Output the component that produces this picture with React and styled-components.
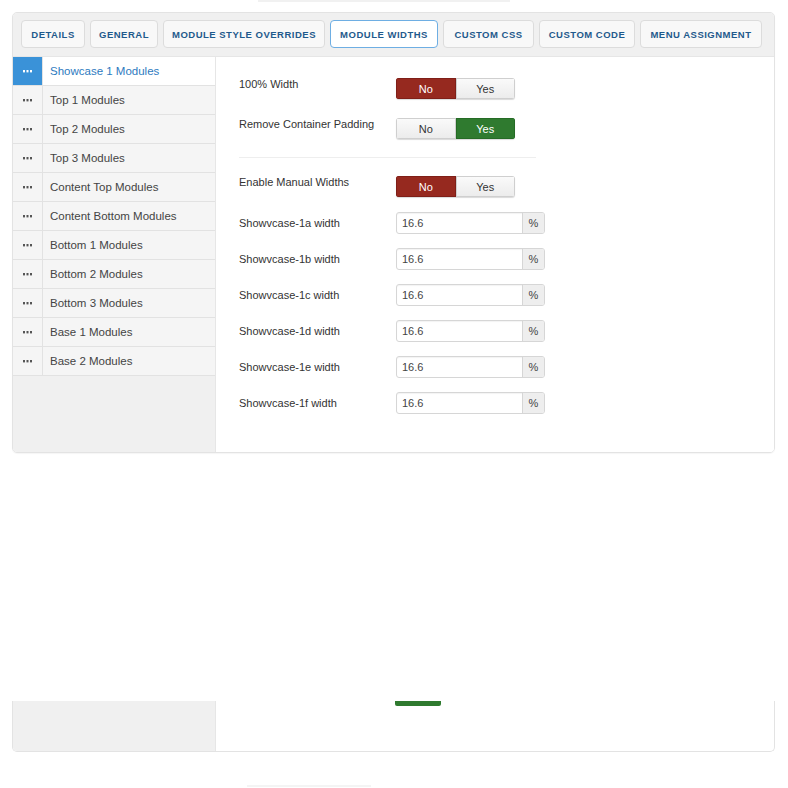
import styled, { createGlobalStyle, css } from "styled-components";

const Global = createGlobalStyle`
  html, body {
    margin: 0;
    padding: 0;
    background: #ffffff;
  }
  body {
    font-family: "Liberation Sans", Arial, sans-serif;
    font-size: 12px;
    color: #333;
  }
`;

const Page = styled.div`
  width: 788px;
  height: 788px;
  padding: 0 12px;
  box-sizing: border-box;
  overflow: hidden;
`;

const TopStrip = styled.div`
  height: 2px;
  width: 252px;
  margin-left: 246px;
  background: #f1f1f1;
`;

const Panel = styled.div`
  margin-top: 10px;
  width: 763px;
  height: 441px;
  box-sizing: border-box;
  border: 1px solid #e3e3e3;
  border-radius: 5px;
  overflow: hidden;
  display: flex;
  flex-direction: column;
  box-shadow: 0 1px 1px rgba(0, 0, 0, 0.04);
`;

const TabBar = styled.div`
  display: flex;
  gap: 5px;
  padding: 7px 8px 8px 8px;
  background: #f0f0f0;
  border-bottom: 1px solid #e6e6e6;
`;

const Tab = styled.div`
  width: ${({ $w }) => $w}px;
  height: 28px;
  flex-shrink: 0;
  box-sizing: border-box;
  display: flex;
  align-items: center;
  justify-content: center;
  border: 1px solid ${({ $active }) => ($active ? "#6eaee3" : "#dcdcdc")};
  border-radius: 4px;
  background: ${({ $active }) => ($active ? "#ffffff" : "#f8f8f8")};
  color: #1f5a8c;
  font-size: 9.5px;
  font-weight: bold;
  letter-spacing: 0.5px;
  text-transform: uppercase;
  white-space: nowrap;
`;

const Body = styled.div`
  flex: 1;
  display: flex;
`;

const Sidebar = styled.div`
  width: 203px;
  box-sizing: border-box;
  background: #f0f0f0;
  border-right: 1px solid #e6e6e6;
`;

const Item = styled.div`
  display: flex;
  height: 29px;
  box-sizing: border-box;
  border-bottom: 1px solid #e2e2e2;
  background: ${({ $active }) => ($active ? "#ffffff" : "#f5f5f5")};
`;

const Handle = styled.div`
  width: 30px;
  box-sizing: border-box;
  flex-shrink: 0;
  display: flex;
  align-items: center;
  justify-content: center;
  border-right: 1px solid #e2e2e2;
  background: ${({ $active }) => ($active ? "#3a92d8" : "transparent")};
  color: ${({ $active }) => ($active ? "#ffffff" : "#555")};
`;

const ItemLabel = styled.div`
  display: flex;
  align-items: center;
  padding-left: 7px;
  font-size: 11.5px;
  color: ${({ $active }) => ($active ? "#2d7ac0" : "#444")};
`;

const Content = styled.div`
  flex: 1;
  background: #ffffff;
  padding: 21px 0 0 23px;
`;

const Row = styled.div`
  display: flex;
  align-items: ${({ $top }) => ($top ? "flex-start" : "center")};
  margin-bottom: ${({ $gap }) => $gap}px;
`;

const Label = styled.div`
  width: 157px;
  flex-shrink: 0;
  font-size: 11px;
  color: #333;
`;

const Toggle = styled.div`
  display: flex;
  width: 119px;
  height: 21px;
  border-radius: 3px;
  overflow: hidden;
  box-shadow: 0 1px 1px rgba(0, 0, 0, 0.15);
`;

const ToggleBtn = styled.div`
  flex: 1;
  display: flex;
  align-items: center;
  justify-content: center;
  font-size: 11px;
  box-sizing: border-box;
  ${({ $on, $color }) =>
    $on
      ? css`
          background: ${$color};
          color: #fff;
          border: 1px solid ${$color === "#96291f" ? "#7f1f18" : "#256b25"};
        `
      : css`
          background: linear-gradient(#fafafa, #ececec);
          color: #333;
          border: 1px solid #cfcfcf;
        `}
`;

const Divider = styled.div`
  width: 297px;
  height: 1px;
  background: #eeeeee;
  margin: 0 0 18px 0;
`;

const InputGroup = styled.div`
  display: flex;
  width: 149px;
  height: 22px;
  box-sizing: border-box;
  border: 1px solid #d6d6d6;
  border-radius: 3px;
  overflow: hidden;
  box-shadow: inset 0 1px 1px rgba(0, 0, 0, 0.05);
`;

const Input = styled.div`
  flex: 1;
  display: flex;
  align-items: center;
  padding-left: 5px;
  font-size: 11px;
  color: #444;
`;

const Addon = styled.div`
  width: 21px;
  display: flex;
  align-items: center;
  justify-content: center;
  background: #eeeeee;
  border-left: 1px solid #d6d6d6;
  font-size: 11px;
  color: #444;
`;

const Fragment = styled.div`
  margin-top: 248px;
  width: 763px;
  height: 51px;
  box-sizing: border-box;
  border: 1px solid #e3e3e3;
  border-top: none;
  border-radius: 0 0 5px 5px;
  display: flex;
  overflow: hidden;
`;

const FragSide = styled.div`
  width: 203px;
  box-sizing: border-box;
  background: #f0f0f0;
  border-right: 1px solid #e6e6e6;
`;

const FragMain = styled.div`
  flex: 1;
  padding-left: 179px;
`;

const GreenSliver = styled.div`
  width: 46px;
  height: 5px;
  background: #2f7a2f;
  border-radius: 0 0 2px 2px;
`;

const BottomFaint = styled.div`
  margin: 33px 0 0 235px;
  width: 124px;
  height: 2px;
  background: #f4f4f4;
`;

const tabs = [
  ["Details", 64],
  ["General", 68],
  ["Module Style Overrides", 162],
  ["Module Widths", 108],
  ["Custom CSS", 91],
  ["Custom Code", 96],
  ["Menu Assignment", 122],
];

const items = [
  "Showcase 1 Modules",
  "Top 1 Modules",
  "Top 2 Modules",
  "Top 3 Modules",
  "Content Top Modules",
  "Content Bottom Modules",
  "Bottom 1 Modules",
  "Bottom 2 Modules",
  "Bottom 3 Modules",
  "Base 1 Modules",
  "Base 2 Modules",
];

const widths = ["1a", "1b", "1c", "1d", "1e", "1f"];

const Dots = () => (
  <svg width="9" height="3" viewBox="0 0 9 3">
    <rect x="0" y="0" width="2" height="2.4" fill="currentColor" />
    <rect x="3.5" y="0" width="2" height="2.4" fill="currentColor" />
    <rect x="7" y="0" width="2" height="2.4" fill="currentColor" />
  </svg>
);

const YesNo = ({ value }) => (
  <Toggle>
    <ToggleBtn $on={!value} $color="#96291f">No</ToggleBtn>
    <ToggleBtn $on={value} $color="#2f7a2f">Yes</ToggleBtn>
  </Toggle>
);

export default function App() {
  return (
    <Page>
      <Global />
      <TopStrip />
      <Panel>
        <TabBar>
          {tabs.map(([t, w]) => (
            <Tab key={t} $w={w} $active={t === "Module Widths"}>
              {t}
            </Tab>
          ))}
        </TabBar>
        <Body>
          <Sidebar>
            {items.map((it, i) => (
              <Item key={it} $active={i === 0}>
                <Handle $active={i === 0}>
                  <Dots />
                </Handle>
                <ItemLabel $active={i === 0}>{it}</ItemLabel>
              </Item>
            ))}
          </Sidebar>
          <Content>
            <Row $top $gap={19}>
              <Label>100% Width</Label>
              <YesNo value={false} />
            </Row>
            <Row $top $gap={18}>
              <Label>Remove Container Padding</Label>
              <YesNo value={true} />
            </Row>
            <Divider />
            <Row $top $gap={15}>
              <Label>Enable Manual Widths</Label>
              <YesNo value={false} />
            </Row>
            {widths.map((w) => (
              <Row key={w} $gap={14}>
                <Label>Showvcase-{w} width</Label>
                <InputGroup>
                  <Input>16.6</Input>
                  <Addon>%</Addon>
                </InputGroup>
              </Row>
            ))}
          </Content>
        </Body>
      </Panel>
      <Fragment>
        <FragSide />
        <FragMain>
          <GreenSliver />
        </FragMain>
      </Fragment>
      <BottomFaint />
    </Page>
  );
}
